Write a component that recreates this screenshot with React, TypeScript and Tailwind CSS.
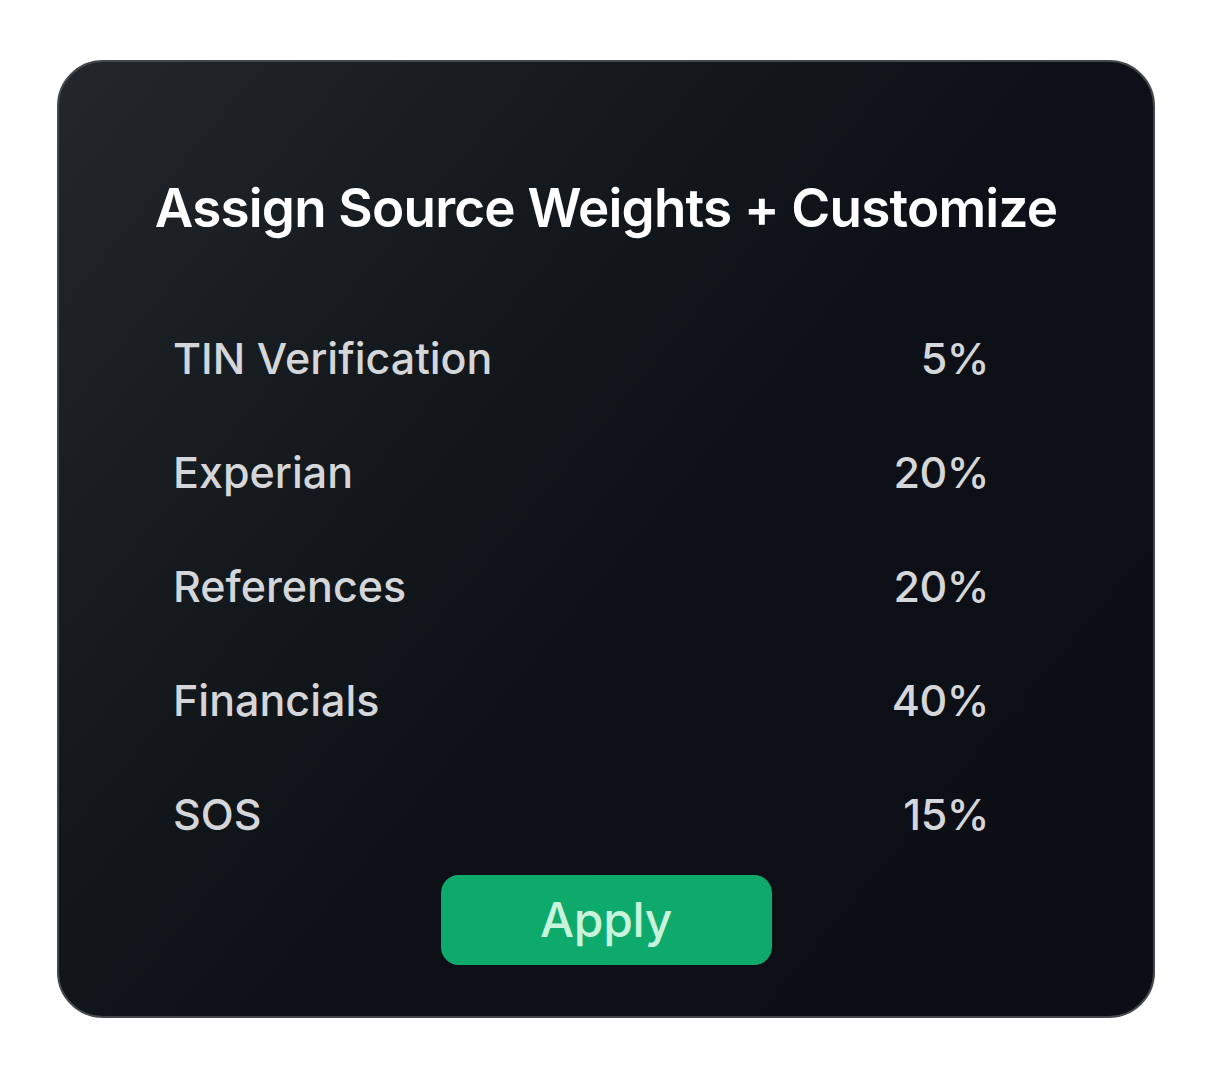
import React from "react";

const rows: [string, string][] = [
  ["TIN Verification", "5%"],
  ["Experian", "20%"],
  ["References", "20%"],
  ["Financials", "40%"],
  ["SOS", "15%"],
];

export default function App() {
  return (
    <div className="min-h-[1078px] w-[1214px] bg-white pt-[60px] pl-[57px]" style={{ fontFamily: "Inter, 'Noto Sans', sans-serif" }}>
      <div className="w-[1098px] h-[958px] rounded-[46px] border-2 border-[#44474b] bg-[linear-gradient(130deg,#21272b_0%,#141a1e_28%,#0d1117_55%,#0b0e14_100%)] flex flex-col items-center">
        <h1 className="mt-[114px] text-[53px] leading-[64px] font-semibold text-white tracking-[-0.8px]">
          Assign Source Weights + Customize
        </h1>
        <div className="mt-[61px] w-[816px] self-start ml-[114px] flex flex-col">
          {rows.map(([label, val]) => (
            <div key={label} className="flex justify-between h-[114px] leading-[114px] text-[43px] font-medium text-[#d5d6d9] tracking-[0px]">
              <span>{label}</span>
              <span className="tracking-[-0.5px]">{val}</span>
            </div>
          ))}
        </div>
        <button className="mt-[4px] w-[331px] h-[90px] rounded-[18px] bg-[#0daa6c] text-[#c8f3dc] text-[48px] font-medium tracking-[-0.3px] leading-[90px]">
          Apply
        </button>
      </div>
    </div>
  );
}
